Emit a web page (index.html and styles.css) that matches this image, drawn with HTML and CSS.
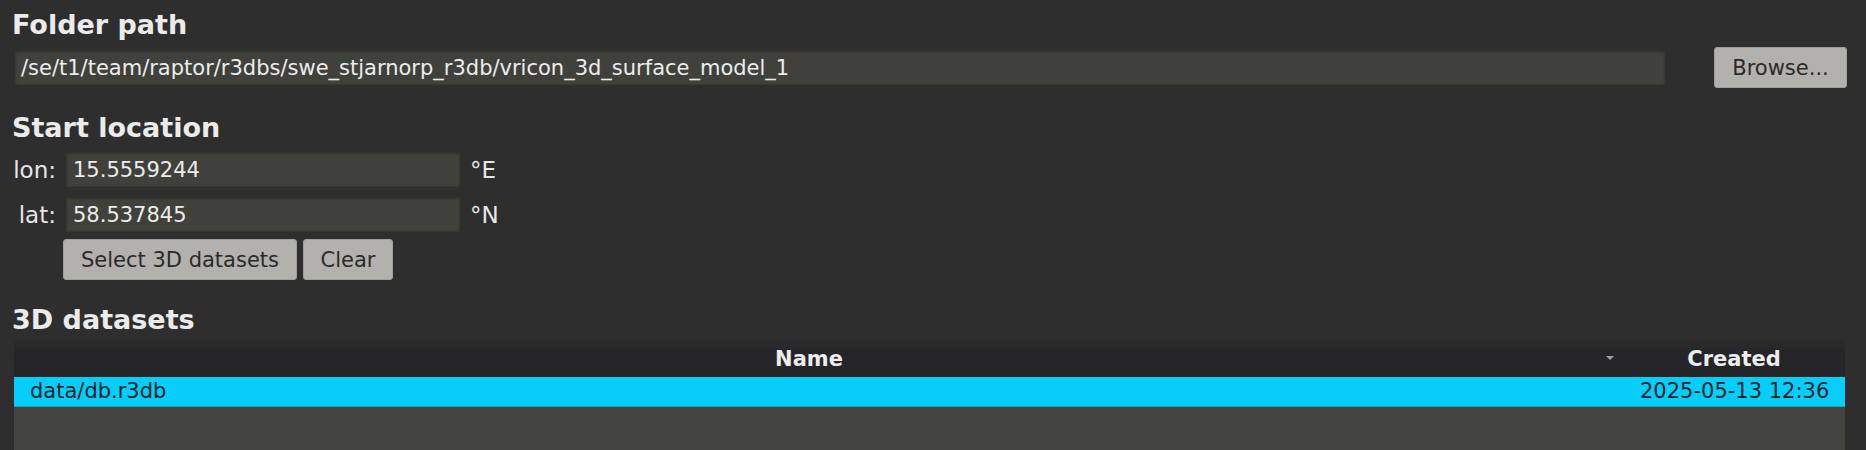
FILE: index.html
```html
<!DOCTYPE html>
<html>
<head>
<meta charset="utf-8">
<link rel="stylesheet" href="styles.css">
</head>
<body>
<div class="page">
  <h2 class="section-title first">Folder path</h2>
  <div class="path-row">
    <div class="field path-field">/se/t1/team/raptor/r3dbs/swe_stjarnorp_r3db/vricon_3d_surface_model_1</div>
    <button class="btn browse-btn">Browse...</button>
  </div>

  <h2 class="section-title">Start location</h2>
  <div class="coord-grid">
    <span class="coord-label">lon:</span>
    <div class="field coord-field">15.5559244</div>
    <span class="coord-unit">°E</span>
    <span class="coord-label">lat:</span>
    <div class="field coord-field">58.537845</div>
    <span class="coord-unit">°N</span>
  </div>
  <div class="btn-row">
    <button class="btn select-btn">Select 3D datasets</button>
    <button class="btn clear-btn">Clear</button>
  </div>

  <h2 class="section-title">3D datasets</h2>
  <div class="table">
    <div class="table-head">
      <div class="col-name head-name">Name<span class="sort-arrow"></span></div>
      <div class="col-created head-created">Created</div>
    </div>
    <div class="table-row selected">
      <div class="col-name cell-name">data/db.r3db</div>
      <div class="col-created cell-created">2025-05-13 12:36</div>
    </div>
    <div class="table-fill"></div>
  </div>
</div>
</body>
</html>
```
FILE: styles.css
```css
html, body {
  margin: 0;
  padding: 0;
  background: #2e2e2e;
  overflow: hidden;
}
body {
  font-family: "DejaVu Sans", sans-serif;
  font-size: 21px;
  color: #e6e6e6;
  width: 1866px;
  height: 450px;
}
.page {
  display: flex;
  flex-direction: column;
  padding: 10px 19px 0 12px;
}
.section-title {
  margin: 25px 0 0 0;
  font-size: 27px;
  line-height: 30px;
  font-weight: bold;
  color: #ebebeb;
}
.section-title.first {
  margin-top: 0;
}
.path-row {
  display: flex;
  align-items: center;
  margin-top: 7px;
  height: 41px;
  gap: 49px;
  padding-left: 3px;
}
.field {
  box-sizing: border-box;
  height: 35px;
  background: #41413c;
  border: 1px solid #373733;
  border-top-color: #31312e;
  box-shadow: inset 0 1px 2px rgba(0,0,0,0.25);
  color: #ececec;
  display: flex;
  align-items: center;
  white-space: nowrap;
  overflow: hidden;
}
.path-field {
  flex: 1;
  padding-left: 5px;
}
.btn {
  box-sizing: border-box;
  height: 41px;
  font-family: "DejaVu Sans", sans-serif;
  font-size: 21px;
  color: #2a2a2a;
  background: #b3b1ad;
  border: 1px solid #a19f9b;
  border-radius: 3px;
  padding: 0;
  margin: 0;
  white-space: nowrap;
  display: flex;
  align-items: center;
  justify-content: center;
}
.browse-btn {
  width: 133px;
}
.coord-grid {
  display: grid;
  grid-template-columns: 44px 394px auto;
  column-gap: 10px;
  row-gap: 10px;
  margin-top: 9px;
  align-items: center;
}
.coord-label {
  text-align: right;
  font-size: 23px;
  color: #e6e6e6;
}
.coord-field {
  padding-left: 6px;
}
.coord-unit {
  font-size: 23px;
  color: #e6e6e6;
}
.btn-row {
  display: flex;
  gap: 6px;
  margin-top: 7px;
  padding-left: 51px;
}
.select-btn {
  width: 234px;
}
.clear-btn {
  width: 90px;
}
.table {
  margin: 5px 2px 0 2px;
  display: flex;
  flex-direction: column;
  height: 110px;
}
.table-head {
  display: flex;
  height: 37px;
  background: linear-gradient(#2d2d2d 0px, #262528 10px, #252428 100%);
  font-weight: bold;
  color: #ededed;
}
.table-row {
  display: flex;
  height: 29px;
  line-height: 29px;
}
.table-row.selected {
  background: #06cdfa;
  color: #15232b;
  border-bottom: 1px solid #2f9cb5;
}
.col-name {
  flex: 1;
  position: relative;
}
.col-created {
  box-sizing: border-box;
  width: 223px;
  padding: 0 17px 0 18px;
  white-space: nowrap;
}
.head-name {
  text-align: center;
  padding-right: 18px;
  padding-top: 2px;
  line-height: 35px;
}
.head-created {
  text-align: center;
  padding-top: 2px;
  line-height: 35px;
}
.sort-arrow {
  position: absolute;
  right: 8px;
  top: 16px;
  width: 0;
  height: 0;
  border-left: 4px solid transparent;
  border-right: 4px solid transparent;
  border-top: 4px solid #a0a0a0;
}
.cell-name {
  padding-left: 16px;
}
.table-fill {
  flex: 1;
  background: #454540;
}
```
